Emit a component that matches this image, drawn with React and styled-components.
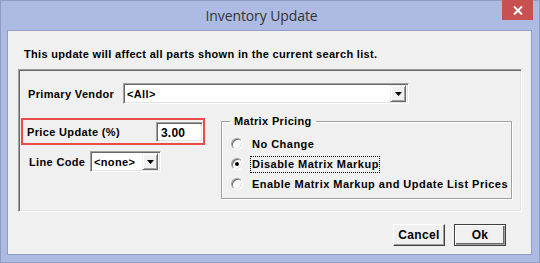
import React from 'react';
import styled, { createGlobalStyle } from 'styled-components';

const GlobalStyle = createGlobalStyle`
  html, body { margin: 0; padding: 0; background: #adbbe3; }
  * { box-sizing: border-box; }
`;

const Window = styled.div`
  width: 540px;
  height: 263px;
  background: #adbbe3;
  border: 1px solid #8f9cc6;
  display: flex;
  flex-direction: column;
`;

const TitleBar = styled.div`
  height: 29px;
  display: grid;
  grid-template-columns: 1fr auto 1fr;
  align-items: start;
`;

const Title = styled.div`
  grid-column: 2;
  font-family: 'Open Sans', 'Noto Sans', sans-serif;
  font-size: 14px;
  letter-spacing: -0.1px;
  color: #333;
  padding: 5px 17px 0 0;
`;

const CloseButton = styled.div`
  grid-column: 3;
  justify-self: end;
  margin-right: 6px;
  margin-top: -1px;
  width: 31px;
  height: 20px;
  background: #c75050;
  display: flex;
  align-items: center;
  justify-content: center;
`;

const Client = styled.div`
  flex: 1;
  margin: 0 7px 7px 6px;
  background: #f0f0f0;
  border: 1px solid #8f9cc6;
  font-family: 'Liberation Sans', Arial, sans-serif;
  font-weight: bold;
  font-size: 11px;
  letter-spacing: 0.35px;
  color: #000;
  display: flex;
  flex-direction: column;
`;

const Intro = styled.div`
  padding: 17px 0 0 16px;
  height: 38px;
  letter-spacing: 0.32px;
`;

const Sunken = styled.div`
  margin-left: 10px;
  width: 504px;
  height: 143px;
  border: 1px solid;
  border-color: #a0a0a0 #fff #fff #a0a0a0;
  box-shadow: inset 1px 1px 0 #696969, inset -1px -1px 0 #e3e3e3;
  padding: 13px 0 0 9px;
  display: flex;
  flex-direction: column;
`;

const Row = styled.div`
  display: flex;
  align-items: center;
`;

const Label = styled.span`
  width: ${p => p.w}px;
  flex-shrink: 0;
`;

const Combo = styled.div`
  width: ${p => p.w}px;
  height: 21px;
  background: #fff;
  border: 1px solid;
  border-color: #a0a0a0 #fff #fff #a0a0a0;
  box-shadow: inset 1px 1px 0 #696969, inset -1px -1px 0 #e3e3e3;
  display: flex;
  align-items: center;
  padding: 2px 2px 2px 3px;
`;

const ComboText = styled.span`
  flex: 1;
`;

const ArrowButton = styled.div`
  width: 16px;
  height: 17px;
  background: #f0f0f0;
  border: 1px solid;
  border-color: #f0f0f0 #696969 #696969 #f0f0f0;
  box-shadow: inset 1px 1px 0 #fff, inset -1px -1px 0 #a0a0a0;
  display: flex;
  align-items: center;
  justify-content: center;
`;

const Body = styled.div`
  display: flex;
  margin-top: 14px;
  margin-left: -7px;
`;

const LeftCol = styled.div`
  width: 200px;
  display: flex;
  flex-direction: column;
`;

const Highlight = styled.div`
  width: 184px;
  height: 27px;
  border: 2px solid #e84b4a;
  display: flex;
  align-items: center;
  padding-left: 4px;
`;

const TextBox = styled.div`
  width: 48px;
  height: 20px;
  background: #fff;
  border: 1px solid;
  border-color: #a0a0a0 #fff #fff #a0a0a0;
  box-shadow: inset 1px 1px 0 #696969, inset -1px -1px 0 #e3e3e3;
  padding: 3px 0 0 4px;
  font-size: 12px;
  letter-spacing: 0.2px;
`;

const LineRow = styled(Row)`
  margin-top: 6px;
  padding-left: 8px;
`;

const Group = styled.fieldset`
  margin: -3px 0 0 0;
  width: 291px;
  height: 84px;
  padding: 7px 0 0 9px;
  border: 1px solid #a0a0a0;
  box-shadow: inset 1px 1px 0 #fff, 1px 1px 0 #fff;
  display: flex;
  flex-direction: column;
`;

const Legend = styled.legend`
  margin-left: -1px;
  padding: 0 4px;
  font-size: 11px;
`;

const Option = styled.div`
  height: 20px;
  display: flex;
  align-items: center;
  gap: 7px;
`;

const Radio = styled.div`
  width: 12px;
  height: 12px;
  border-radius: 50%;
  background: #fff;
  border: 1px solid;
  border-color: #a0a0a0 #fff #fff #a0a0a0;
  box-shadow: inset 1px 1px 0 #696969, inset -1px -1px 0 #e3e3e3;
  display: flex;
  align-items: center;
  justify-content: center;
  &::after {
    content: '';
    width: 4px;
    height: 4px;
    border-radius: 50%;
    background: ${p => (p.checked ? '#000' : 'transparent')};
  }
`;

const OptionText = styled.span`
  padding: 1px 0 2px 1px;
  border: 1px dotted ${p => (p.focused ? '#000' : 'transparent')};
  letter-spacing: 0.48px;
`;

const Buttons = styled.div`
  display: flex;
  justify-content: flex-end;
  gap: 9px;
  padding: 12px 25px 0 0;
`;

const Button = styled.div`
  width: 52px;
  height: 22px;
  background: #f0f0f0;
  border: 1px solid;
  border-color: ${p => (p.primary ? '#404040' : '#fff #404040 #404040 #fff')};
  box-shadow: ${p =>
    p.primary
      ? 'inset 1px 1px 0 #fff, inset -1px -1px 0 #a0a0a0, inset -2px -2px 0 #696969'
      : 'inset -1px -1px 0 #a0a0a0'};
  display: flex;
  align-items: center;
  justify-content: center;
  font-size: 12px;
`;

const Arrow = () => (
  <svg width="7" height="4" viewBox="0 0 7 4">
    <path d="M0 0h7L3.5 4z" fill="#000" />
  </svg>
);

const App = () => (
  <>
    <GlobalStyle />
    <Window>
      <TitleBar>
        <Title>Inventory Update</Title>
        <CloseButton>
          <svg width="10" height="9" viewBox="0 0 10 9">
            <path d="M1 0.5l8 8M9 0.5l-8 8" stroke="#fff" strokeWidth="2" />
          </svg>
        </CloseButton>
      </TitleBar>
      <Client>
        <Intro>This update will affect all parts shown in the current search list.</Intro>
        <Sunken>
          <Row>
            <Label w={95}>Primary Vendor</Label>
            <Combo w={286}>
              <ComboText>&lt;All&gt;</ComboText>
              <ArrowButton><Arrow /></ArrowButton>
            </Combo>
          </Row>
          <Body>
            <LeftCol>
              <Highlight>
                <Label w={129}>Price Update (%)</Label>
                <TextBox>3.00</TextBox>
              </Highlight>
              <LineRow>
                <Label w={61}>Line Code</Label>
                <Combo w={71}>
                  <ComboText>&lt;none&gt;</ComboText>
                  <ArrowButton><Arrow /></ArrowButton>
                </Combo>
              </LineRow>
            </LeftCol>
            <Group>
              <Legend>Matrix Pricing</Legend>
              <Option>
                <Radio />
                <OptionText>No Change</OptionText>
              </Option>
              <Option>
                <Radio checked />
                <OptionText focused>Disable Matrix Markup</OptionText>
              </Option>
              <Option>
                <Radio />
                <OptionText>Enable Matrix Markup and Update List Prices</OptionText>
              </Option>
            </Group>
          </Body>
        </Sunken>
        <Buttons>
          <Button>Cancel</Button>
          <Button primary>Ok</Button>
        </Buttons>
      </Client>
    </Window>
  </>
);

export default App;
